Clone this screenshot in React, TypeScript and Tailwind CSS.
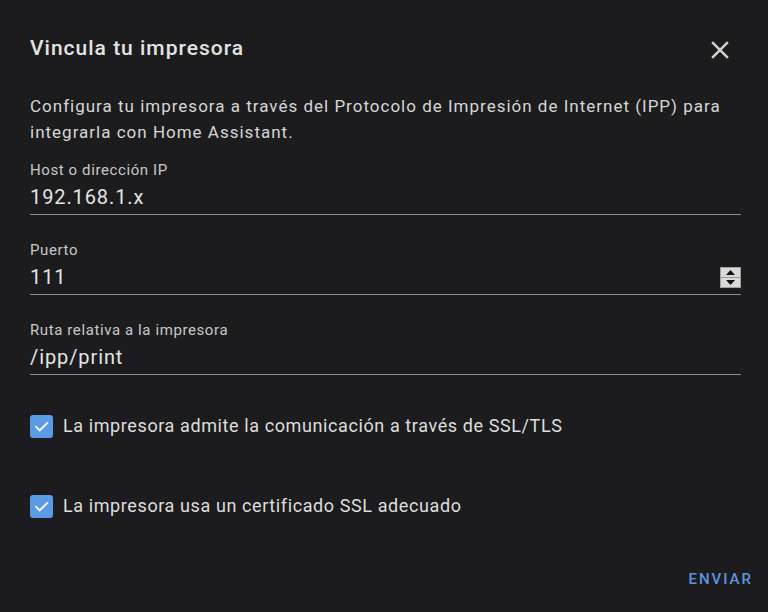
import React from "react";

function Check() {
  return (
    <div className="w-[23px] h-[23px] rounded-[3px] bg-[#5b9be6] flex items-center justify-center shrink-0">
      <svg width="17" height="17" viewBox="0 0 24 24" fill="none">
        <path d="M4.5 12.5l5 5L20 7" stroke="#ffffff" strokeWidth="2.6" strokeLinecap="square" />
      </svg>
    </div>
  );
}

function Field({ label, value, spinner }: { label: string; value: string; spinner?: boolean }) {
  return (
    <div className="flex flex-col">
      <div className="text-[15px] leading-[20px] text-[#c8c8c8] tracking-[0.6px]">{label}</div>
      <div className="flex items-center justify-between h-[35px] border-b border-[#8e8e8e]">
        <span className="text-[20px] leading-[28px] text-[#e4e4e4] tracking-[0.9px]">{value}</span>
        {spinner && (
          <div className="w-[21px] h-[21px] bg-[#d9d9d9] border border-[#a0a0a0] flex flex-col">
            <div className="flex-1 flex items-center justify-center border-b border-[#9a9a9a]">
              <svg width="9" height="5" viewBox="0 0 9 5"><path d="M0 5L4.5 0L9 5Z" fill="#111" /></svg>
            </div>
            <div className="flex-1 flex items-center justify-center">
              <svg width="9" height="5" viewBox="0 0 9 5"><path d="M0 0L4.5 5L9 0Z" fill="#111" /></svg>
            </div>
          </div>
        )}
      </div>
    </div>
  );
}

export default function App() {
  return (
    <div
      className="w-[768px] h-[612px] bg-[#1c1c1e] text-[#e1e1e1] relative overflow-hidden"
      style={{ fontFamily: "Roboto, 'Noto Sans', sans-serif" }}
    >
      <div className="flex items-start justify-between pl-[30px] pr-[33px] pt-[34px]">
        <h1 className="text-[21px] leading-[28px] font-medium text-[#e3e3e3] tracking-[1px]">Vincula tu impresora</h1>
        <svg width="30" height="30" viewBox="0 0 24 24" className="mt-[1px]">
          <path d="M19 6.41L17.59 5 12 10.59 6.41 5 5 6.41 10.59 12 5 17.59 6.41 19 12 13.41 17.59 19 19 17.59 13.41 12z" fill="#d0d0d0" />
        </svg>
      </div>
      <div className="pl-[30px] pr-[27px]">
        <p className="mt-[28px] text-[17px] leading-[26px] text-[#d6d6d6] tracking-[1px]">
          Configura tu impresora a través del Protocolo de Impresión de Internet (IPP) para integrarla con Home Assistant.
        </p>
        <div className="mt-[15px] flex flex-col gap-[25px]">
          <Field label="Host o dirección IP" value="192.168.1.x" />
          <Field label="Puerto" value="111" spinner />
          <Field label="Ruta relativa a la impresora" value="/ipp/print" />
        </div>
        <div className="mt-[39px] flex flex-col gap-[56px]">
          <div className="flex items-center gap-[10px]">
            <Check />
            <span className="text-[18px] leading-[24px] text-[#dedede] tracking-[0.6px]">La impresora admite la comunicación a través de SSL/TLS</span>
          </div>
          <div className="flex items-center gap-[10px]">
            <Check />
            <span className="text-[18px] leading-[24px] text-[#dedede] tracking-[0.6px]">La impresora usa un certificado SSL adecuado</span>
          </div>
        </div>
      </div>
      <div className="absolute right-[15px] bottom-[23px] text-[15px] leading-[20px] font-medium tracking-[2px] text-[#5a96df]">ENVIAR</div>
    </div>
  );
}
